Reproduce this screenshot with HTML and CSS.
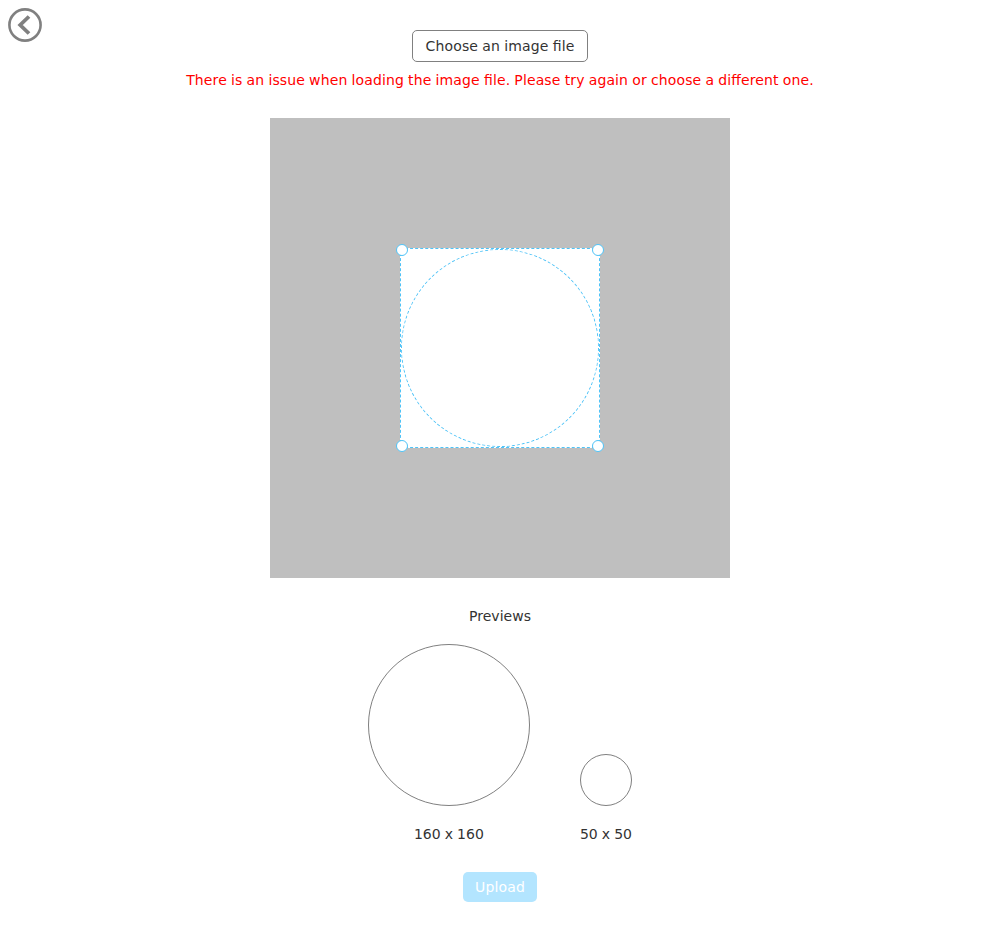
FILE: index.html
```html
<!DOCTYPE html>
<html lang="en">
<head>
<meta charset="utf-8">
<title>Upload image</title>
<link rel="stylesheet" href="styles.css">
</head>
<body>
<button class="back" aria-label="Back">
  <svg width="34" height="34" viewBox="0 0 34 34" fill="none" stroke="#808080"><circle cx="17" cy="17" r="15.6" stroke-width="2.6"/><path d="M21 8.5 12.2 17l8.800 8.500" stroke-width="3.800"/></svg>
</button>
<main class="page">
  <button class="choose">Choose an image file</button>
  <p class="error">There is an issue when loading the image file. Please try again or choose a different one.</p>
  <div class="canvas">
    <div class="crop">
      <div class="circle"></div>
      <i class="handle nw"></i><i class="handle ne"></i><i class="handle sw"></i><i class="handle se"></i>
    </div>
  </div>
  <h2 class="title">Previews</h2>
  <div class="previews">
    <div class="preview"><div class="avatar large"></div><span class="size">160 x 160</span></div>
    <div class="preview"><div class="avatar small"></div><span class="size">50 x 50</span></div>
  </div>
  <button class="upload" disabled>Upload</button>
</main>
</body>
</html>
```
FILE: styles.css
```css
* { box-sizing: border-box; }
body { margin: 0; background: #fff; color: #333; font: 14px/20px "DejaVu Sans", sans-serif; font-feature-settings: "liga" 1; }
button { font: inherit; font-feature-settings: inherit; letter-spacing: 0.155px; word-spacing: -0.45px; }
.back { position: absolute; left: 8px; top: 8px; width: 34px; height: 34px; padding: 0; border: 0; background: none; }
.back svg { display: block; }
.page { display: flex; flex-direction: column; align-items: center; padding-top: 30px; }
.choose { width: 176px; height: 32px; padding: 0; border: 1px solid #808080; border-radius: 5px; background: #fff; color: #333; }
.error { margin: 8px 0 28px; color: #f00; letter-spacing: 0.125px; word-spacing: -0.45px; }
.canvas { display: grid; place-items: center; width: 460px; height: 460px; background: #bfbfbf; }
.crop { position: relative; width: 200px; height: 200px; border: 1px dashed #4fc3f7; background: #fff; }
.circle { width: 198px; height: 198px; border: 1px dashed #4fc3f7; border-radius: 50%; }
.handle { position: absolute; width: 12px; height: 12px; border: 1px solid #4fc3f7; border-radius: 50%; background: #fff; }
.nw, .ne { top: -5px; }
.sw, .se { bottom: -5px; }
.nw, .sw { left: -5px; }
.ne, .se { right: -5px; }
.title { margin: 28px 0 18px; font-size: 14px; font-weight: 400; letter-spacing: 0.05px; }
.previews { display: flex; align-items: flex-end; gap: 50px; }
.preview { display: flex; flex-direction: column; align-items: center; gap: 18px; }
.size { letter-spacing: 0.03px; word-spacing: -0.45px; }
.avatar { border: 1px solid #808080; border-radius: 50%; }
.large { width: 162px; height: 162px; }
.small { width: 52px; height: 52px; }
.upload { width: 74px; height: 30px; margin-top: 28px; padding: 0; border: 0; border-radius: 5px; background: #b3e5ff; color: #fff; }
```
